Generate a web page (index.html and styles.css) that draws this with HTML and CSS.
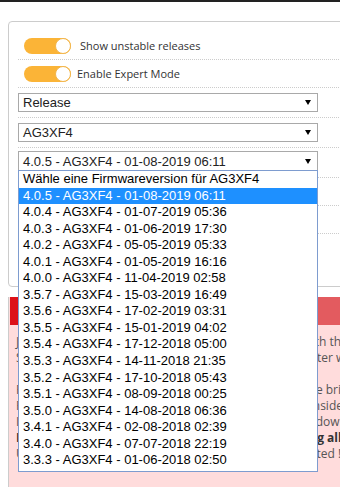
FILE: index.html
```html
<!DOCTYPE html>
<html lang="de">
<head>
  <meta charset="UTF-8" />
  <meta name="viewport" content="width=device-width, initial-scale=1.0"/>
  <title>Firmware Update</title>
  <link rel="stylesheet" href="styles.css">
</head>
<body>
  <div class="topbar"></div>

  <!-- Firmware settings -->
  <div class="card">
    <div class="row row-toggle">
      <span class="switch"><span class="knob"></span></span>
      <span class="label">Show unstable releases</span>
    </div>
    <div class="row row-toggle">
      <span class="switch"><span class="knob"></span></span>
      <span class="label label-tight">Enable Expert Mode</span>
    </div>
    <div class="row row-select">
      <div class="select">
        <span class="value">Release</span>
        <svg class="caret" viewBox="0 0 6 5"><polygon points="0,0 6,0 3,5" /></svg>
      </div>
    </div>
    <div class="row row-select">
      <div class="select">
        <span class="value">AG3XF4</span>
        <svg class="caret" viewBox="0 0 6 5"><polygon points="0,0 6,0 3,5" /></svg>
      </div>
    </div>
    <div class="row row-select row-open">
      <div class="select is-open">
        <span class="value">4.0.5 - AG3XF4 - 01-08-2019 06:11</span>
        <svg class="caret" viewBox="0 0 6 5"><polygon points="0,0 6,0 3,5" /></svg>
        <ul class="dropdown">
          <li>Wähle eine Firmwareversion für AG3XF4</li>
          <li class="selected">4.0.5 - AG3XF4 - 01-08-2019 06:11</li>
          <li>4.0.4 - AG3XF4 - 01-07-2019 05:36</li>
          <li>4.0.3 - AG3XF4 - 01-06-2019 17:30</li>
          <li>4.0.2 - AG3XF4 - 05-05-2019 05:33</li>
          <li>4.0.1 - AG3XF4 - 01-05-2019 16:16</li>
          <li>4.0.0 - AG3XF4 - 11-04-2019 02:58</li>
          <li>3.5.7 - AG3XF4 - 15-03-2019 16:49</li>
          <li>3.5.6 - AG3XF4 - 17-02-2019 03:31</li>
          <li>3.5.5 - AG3XF4 - 15-01-2019 04:02</li>
          <li>3.5.4 - AG3XF4 - 17-12-2018 05:00</li>
          <li>3.5.3 - AG3XF4 - 14-11-2018 21:35</li>
          <li>3.5.2 - AG3XF4 - 17-10-2018 05:43</li>
          <li>3.5.1 - AG3XF4 - 08-09-2018 00:25</li>
          <li>3.5.0 - AG3XF4 - 14-08-2018 06:36</li>
          <li>3.4.1 - AG3XF4 - 02-08-2018 02:39</li>
          <li>3.4.0 - AG3XF4 - 07-07-2018 22:19</li>
          <li>3.3.3 - AG3XF4 - 01-06-2018 02:50</li>
        </ul>
      </div>
    </div>
    <div class="row"></div>
    <div class="row"></div>
    <div class="row row-last"></div>
  </div>

  <!-- Warning -->
  <div class="note">
    <div class="note-head">
      <span class="note-badge"></span>
      <span class="note-title">Achtung</span>
    </div>
    <div class="note-body">
      <p>Just install firmware versions which are compatible with the device.</p>
      <p>Settings can be reset, when you update to a version later with a new layout.</p>
      <p class="gap">Flashing the wrong software will cause the device to be bricked.</p>
      <p>Please check all release notes carefully and always consider the risks.</p>
      <p>It is not always possible to return to older versions or downgrade.</p>
      <p class="strong">Please always back up your settings before flashing all devices.</p>
      <p>Unstable releases are at your risk, and are not supported !</p>
    </div>
  </div>
</body>
</html>
```

FILE: styles.css
```css
* {
  margin: 0;
  padding: 0;
  box-sizing: border-box;
}

html, body {
  overflow: hidden;
}

body {
  font-family: 'Open Sans', sans-serif;
  background: #fff;
  color: #333;
  height: 100vh;
}

.topbar {
  height: 2px;
  background: #222;
}

.card {
  width: 420px;
  margin: 19px 0 0 8px;
  padding: 10px 0 9px 9px;
  border: 1px solid #ccc;
  border-radius: 4px;
  background: #fff;
}

.row {
  height: 28px;
  border-bottom: 1px dotted #ccc;
}

.row-toggle {
  display: flex;
  align-items: center;
  padding-left: 6px;
  font-size: 11px;
}

.switch {
  display: flex;
  justify-content: flex-end;
  width: 47px;
  height: 16px;
  border-radius: 8px;
  background: #fbb437;
}

.knob {
  width: 16px;
  height: 16px;
  border-radius: 50%;
  background: #fff;
  border: 1px solid #f2b54a;
}

.label {
  margin-left: 9px;
}

.label-tight {
  margin-left: 6px;
}

.row-select {
  height: 30px;
  padding-top: 5px;
}

.row-open {
  padding-top: 3px;
}

.row-last {
  height: 43px;
  border-bottom: none;
}

.select {
  position: relative;
  display: flex;
  align-items: center;
  width: 300px;
  height: 19px;
  padding: 0 6px 0 4px;
  border: 1px solid #a9a9a9;
  background: #fff;
  font-family: 'Liberation Sans', Arial, sans-serif;
  font-size: 13px;
  color: #222;
}

.select.is-open {
  height: 20px;
}

.value {
  flex: 1;
  white-space: nowrap;
}

.caret {
  width: 6px;
  height: 5px;
  fill: #000;
}

.dropdown {
  position: absolute;
  top: 100%;
  left: -1px;
  z-index: 10;
  width: 300px;
  padding-bottom: 2px;
  list-style: none;
  border: 1px solid #7e9ccf;
  background: #fff;
  color: #000;
}

.dropdown li {
  padding: 0 4px;
  line-height: 16.55px;
  white-space: nowrap;
}

.dropdown li.selected {
  background: #1e90ff;
  color: #fff;
}

.note {
  width: 420px;
  margin: 10px 0 0 8px;
  border-left: 1px solid #ccc;
  background: #ffdcdc;
  min-height: 200px;
}

.note-head {
  display: flex;
  align-items: center;
  height: 28px;
  margin-left: 1px;
  background: #e35b5f;
  color: #fff;
  font-weight: 600;
  font-size: 13px;
}

.note-badge {
  width: 30px;
  height: 100%;
  background: #dd1119;
}

.note-title {
  margin-left: 8px;
}

.note-body {
  padding: 9px 8px 20px 7px;
  font-size: 12px;
  line-height: 16px;
  color: #555;
}

.note-body p {
  white-space: nowrap;
}

.note-body .gap {
  margin-top: 16px;
}

.note-body .strong {
  font-weight: 700;
  color: #333;
}
```
